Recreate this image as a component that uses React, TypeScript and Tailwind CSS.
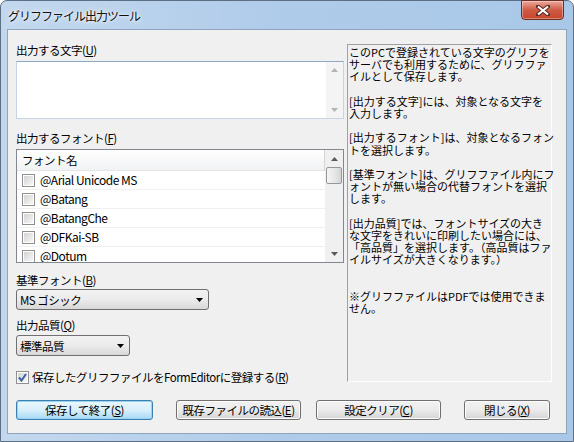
import React from 'react';

const FONT = { fontFamily: '"Noto Sans CJK JP", "Liberation Sans", sans-serif' };

const FONTS = ['@Arial Unicode MS', '@Batang', '@BatangChe', '@DFKai-SB', '@Dotum'];

const HELP = [
  'このPCで登録されている文字のグリフを\nサーバでも利用するために、グリフファ\nイルとして保存します。',
  '[出力する文字]には、対象となる文字を\n入力します。',
  '[出力するフォント]は、対象となるフォン\nトを選択します。',
  '[基準フォント]は、グリフファイル内にフ\nォントが無い場合の代替フォントを選択\nします。',
  '[出力品質]では、フォントサイズの大き\nな文字をきれいに印刷したい場合には、\n「高品質」を選択します。（高品質はファ\nイルサイズが大きくなります。）\n',
  '※グリフファイルはPDFでは使用できま\nせん。',
].join('\n\n');

function Arrow({ up, color = '#5a5a5a' }: { up?: boolean; color?: string }) {
  return (
    <svg width="7" height="4" viewBox="0 0 7 4">
      <polygon points={up ? '0,4 7,4 3.5,0' : '0,0 7,0 3.5,4'} fill={color} />
    </svg>
  );
}

function Label({ text, k }: { text: string; k: string }) {
  return (
    <div className="h-[14px] leading-[14px] text-[11.5px] tracking-[-0.5px] text-black whitespace-nowrap">
      {`${text}(`}
      <span className="underline underline-offset-1">{k}</span>)
    </div>
  );
}

function Box({ checked }: { checked?: boolean }) {
  return (
    <div className="w-[13px] h-[13px] border border-[#8e8f8f] bg-white p-[1px] shrink-0">
      <div className="w-full h-full bg-gradient-to-br from-[#d4d4d4] to-[#f7f7f7] flex items-center justify-center">
        {checked && (
          <svg width="9" height="9" viewBox="0 0 9 9">
            <path d="M1 4.5 L3.5 7.5 L8 1" stroke="#3c5fa8" strokeWidth="2" fill="none" />
          </svg>
        )}
      </div>
    </div>
  );
}

function Select({ value, w }: { value: string; w: string }) {
  return (
    <div
      className={`${w} h-[21px] rounded-[3px] border border-[#707070] bg-gradient-to-b from-[#f2f2f2] via-[#ebebeb] to-[#d8d8d8] flex items-center pl-[3px] pr-[5px]`}
    >
      <span className="flex-1 text-[11.5px] tracking-[-0.5px] leading-[14px] whitespace-pre">{value}</span>
      <Arrow color="#000" />
    </div>
  );
}

function Button({ label, k, w, primary }: { label: string; k: string; w: string; primary?: boolean }) {
  return (
    <div
      className={`${w} h-[20px] rounded-[3px] border flex items-center justify-center text-[11.5px] tracking-[-0.5px] leading-[14px] whitespace-nowrap ${
        primary
          ? 'border-[#3c7fb1] bg-gradient-to-b from-[#eaf6fd] via-[#d9f0fc] to-[#a7d9f5] shadow-[inset_0_0_0_1px_#98d3f3]'
          : 'border-[#707070] bg-gradient-to-b from-[#f2f2f2] via-[#ebebeb] to-[#d5d5d5] shadow-[inset_0_0_0_1px_#fcfcfc]'
      }`}
    >
      {`${label}(`}
      <span className="underline underline-offset-1">{k}</span>)
    </div>
  );
}

export default function App() {
  return (
    <div className="w-[574px] h-[442px] overflow-hidden bg-white" style={FONT}>
      <div className="relative w-[574px] h-[442px] rounded-t-[7px] border border-[#5d6f85] bg-gradient-to-r from-[#c3d8ee] via-[#afcbea] to-[#a9c8e7] flex flex-col">
        {/* title */}
        <div className="h-[28px] flex items-center pl-[7px] pt-[1px]">
          <span className="text-[12px] tracking-[-1px] text-[#111] [text-shadow:0_0_6px_#fff,0_0_3px_#fff]">
            グリフファイル出力ツール
          </span>
        </div>
        <div className="absolute top-[-1px] left-[520px] w-[43px] h-[20px] rounded-b-[4px] border border-[#6e2d22] bg-gradient-to-b from-[#e9a99c] via-[#cf5a44] to-[#c8442b] shadow-[inset_0_0_0_1px_rgba(255,255,255,0.35)] flex items-center justify-center">
          <svg width="14" height="11" viewBox="0 0 14 11">
            <path d="M2 1.5 L12 9.5 M12 1.5 L2 9.5" stroke="#5a2a22" strokeWidth="4" strokeLinecap="square" />
            <path d="M2 1.5 L12 9.5 M12 1.5 L2 9.5" stroke="#fff" strokeWidth="2.2" />
          </svg>
        </div>

        {/* client */}
        <div className="mx-[6px] h-[405px] bg-[#f0f0f0] border border-[#8fa5bd] flex flex-col">
          <div className="flex pt-[13px] pl-[8px]">
            <div className="w-[328px] flex flex-col">
              <Label text="出力する文字" k="U" />
              <div className="mt-[4px] h-[58px] border border-[#c6d5e6] border-t-[#8fa8c4] bg-white flex justify-end">
                <div className="w-[17px] bg-[#f4f4f4] flex flex-col items-center justify-between py-[6px]">
                  <Arrow up color="#b4b4b4" />
                  <Arrow color="#b4b4b4" />
                </div>
              </div>

              <div className="mt-[12px]">
                <Label text="出力するフォント" k="F" />
              </div>
              <div className="mt-[4px] h-[114px] border border-[#828790] bg-white flex overflow-hidden">
                <div className="flex-1 flex flex-col">
                  <div className="h-[21px] shrink-0 bg-gradient-to-b from-[#ffffff] to-[#f1f2f4] border-b border-[#e3e5e9] border-r border-r-[#d5d5d5] flex items-center pl-[5px] text-[11.5px] tracking-[-0.5px] leading-[14px]">
                    フォント名
                  </div>
                  {FONTS.map((f) => (
                    <div
                      key={f}
                      className="h-[19px] shrink-0 border-b border-[#f0f0f0] flex items-center pl-[5px] gap-[5px] text-[12px] tracking-[-0.5px] leading-[14px]"
                    >
                      <Box />
                      <span className="whitespace-nowrap">{f}</span>
                    </div>
                  ))}
                </div>
                <div className="w-[18px] bg-[#f0f0f0] flex flex-col items-center">
                  <div className="h-[17px] flex items-center justify-center">
                    <Arrow up />
                  </div>
                  <div className="w-[16px] h-[17px] rounded-[2px] border border-[#979797] bg-gradient-to-r from-[#f5f5f5] via-[#e8e8e8] to-[#d6d6d6]" />
                  <div className="flex-1" />
                  <div className="h-[17px] flex items-center justify-center">
                    <Arrow />
                  </div>
                </div>
              </div>

              <div className="mt-[10px]">
                <Label text="基準フォント" k="B" />
              </div>
              <div className="mt-[2px]">
                <Select value="MS ゴシック" w="w-[193px]" />
              </div>

              <div className="mt-[8px]">
                <Label text="出力品質" k="Q" />
              </div>
              <div className="mt-[3px]">
                <Select value="標準品質" w="w-[114px]" />
              </div>

              <div className="mt-[14px] flex items-center gap-[3px]">
                <Box checked />
                <span className="text-[11.5px] tracking-[-0.5px] leading-[14px] whitespace-nowrap">
                  {'保存したグリフファイルをFormEditorに登録する('}
                  <span className="underline underline-offset-1">R</span>)
                </span>
              </div>
            </div>

            <div className="ml-[3px] mt-[1px] w-[205px] h-[338px] border border-t-[#a0a0a0] border-l-[#a0a0a0] border-r-white border-b-white bg-[#f0f0f0] pl-[1px] pt-[1px]">
              <p className="text-[11px] leading-[12.2px] whitespace-pre text-black">{HELP}</p>
            </div>
          </div>

          <div className="mt-[16px] pl-[8px] flex">
            <Button label="保存して終了" k="S" w="w-[137px]" primary />
            <div className="ml-[23px]">
              <Button label="既存ファイルの読込" k="E" w="w-[125px]" />
            </div>
            <div className="ml-[15px]">
              <Button label="設定クリア" k="C" w="w-[125px]" />
            </div>
            <div className="ml-[23px]">
              <Button label="閉じる" k="X" w="w-[86px]" />
            </div>
          </div>
        </div>
      </div>
    </div>
  );
}
